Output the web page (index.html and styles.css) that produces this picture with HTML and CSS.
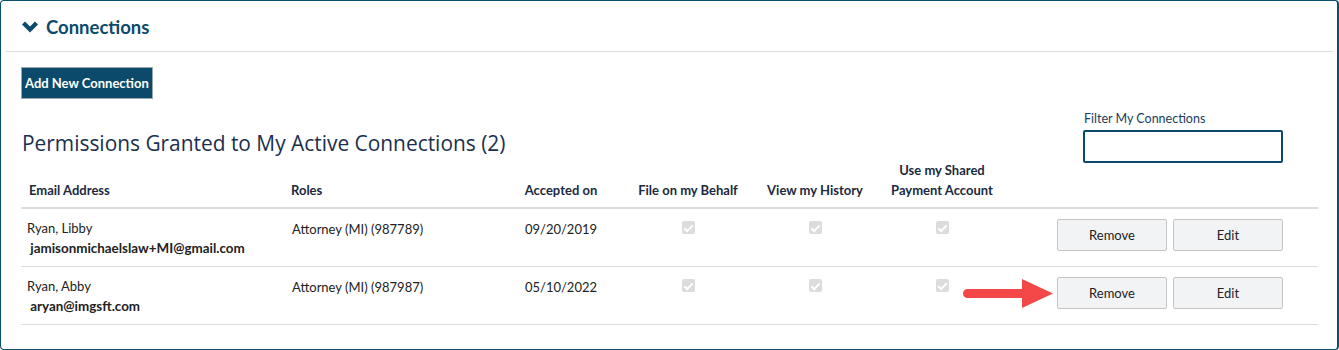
FILE: index.html
```html
<!DOCTYPE html>
<html>
<head>
<meta charset="utf-8">
<link rel="stylesheet" href="styles.css">
</head>
<body>
<div class="card">
  <div class="card-header">
    <svg class="chev" width="16" height="12" viewBox="0 0 16 12"><polygon points="0,3.5 3,0.5 8,5.5 13,0.5 16,3.5 8,11.5" fill="#0b4a6a"/></svg>
    <span class="card-title">Connections</span>
  </div>
  <div class="card-body">
    <button class="btn-primary">Add New Connection</button>
    <div class="toolbar">
      <h2 class="section-title">Permissions Granted to My Active Connections (2)</h2>
      <div class="filter">
        <label class="filter-label">Filter My Connections</label>
        <input class="filter-input" type="text">
      </div>
    </div>
    <table class="grid">
      <colgroup>
        <col class="c1"><col class="c2"><col class="c3"><col class="c4"><col class="c5"><col class="c6"><col class="c7">
      </colgroup>
      <thead>
        <tr>
          <th class="left">Email Address</th>
          <th class="left">Roles</th>
          <th>Accepted on</th>
          <th>File on my Behalf</th>
          <th>View my History</th>
          <th>Use my Shared<br>Payment Account</th>
          <th></th>
        </tr>
      </thead>
      <tbody>
        <tr>
          <td class="left"><div class="name">Ryan, Libby</div><div class="email">&nbsp;jamisonmichaelslaw+MI@gmail.com</div></td>
          <td class="left role">Attorney (MI) (987789)</td>
          <td>09/20/2019</td>
          <td><span class="chk"></span></td>
          <td><span class="chk"></span></td>
          <td><span class="chk"></span></td>
          <td class="actions"><button class="btn">Remove</button><button class="btn">Edit</button></td>
        </tr>
        <tr class="marked">
          <td class="left"><div class="name">Ryan, Abby</div><div class="email">&nbsp;aryan@imgsft.com</div></td>
          <td class="left role">Attorney (MI) (987987)</td>
          <td>05/10/2022</td>
          <td><span class="chk"></span></td>
          <td><span class="chk"></span></td>
          <td><span class="chk"></span></td>
          <td class="actions"><button class="btn">Remove</button><button class="btn">Edit</button></td>
        </tr>
      </tbody>
    </table>
  </div>
  <svg class="arrow" width="92" height="30" viewBox="0 0 92 30"><path d="M4.5 10 H59 V0 L90 14.5 L59 29 V19 H4.5 A4.5 4.5 0 0 1 4.5 10 Z" fill="#f44848"/></svg>
</div>
</body>
</html>
```
FILE: styles.css
```css
* { box-sizing: border-box; }
body {
  margin: 0;
  font-family: "Lato", "Liberation Sans", sans-serif;
  color: #222;
  background: #fff;
}
.card {
  position: relative;
  width: 1339px;
  height: 350px;
  border: 1px solid #0b4f6c;
  border-right-width: 2px;
  border-radius: 4px;
}
.card-header {
  height: 51px;
  margin: 0 4px 0 5px;
  padding-left: 16px;
  border-bottom: 1px solid #dcdcdc;
  display: flex;
  align-items: center;
  gap: 8px;
}
.chev { margin-top: 2px; }
.card-title {
  font-size: 18.5px;
  font-weight: 700;
  color: #0b4a6a;
  margin-top: 2px;
}
.card-body {
  padding: 15px 19px 0 20px;
}
.btn-primary {
  display: block;
  height: 32px;
  padding: 0 3px;
  background: #0b4a6a;
  color: #fff;
  border: 1px solid #9aa8b0;
  font-family: "Lato", sans-serif;
  font-size: 13px;
  font-weight: 700;
}
.toolbar {
  display: flex;
  justify-content: space-between;
  align-items: flex-end;
  margin-top: 12px;
}
.section-title {
  margin: 0 0 8px 1px;
  font-family: "Open Sans", sans-serif;
  font-weight: 400;
  font-size: 20.9px;
  line-height: 24px;
  color: #1b2f4e;
}
.filter {
  display: flex;
  flex-direction: column;
  margin-right: 35px;
}
.filter-label {
  font-size: 12.5px;
  line-height: 16px;
  color: #1a3d5c;
  padding-left: 1px;
}
.filter-input {
  margin-top: 3px;
  width: 200px;
  height: 33px;
  border: 2px solid #0b4a6a;
  border-radius: 2px;
}
.grid {
  width: 1297px;
  margin-top: -3px;
  border-collapse: collapse;
  table-layout: fixed;
}
.c1 { width: 262px; }
.c2 { width: 222px; }
.c3 { width: 112px; }
.c4 { width: 142px; }
.c5 { width: 112px; }
.c6 { width: 142px; }
.c7 { width: 305px; }
.grid th {
  font-size: 13px;
  font-weight: 700;
  line-height: 20px;
  color: #1c2a40;
  text-align: center;
  vertical-align: bottom;
  padding: 0 4px 7px;
  border-bottom: 2px solid #dcdcdc;
}
.grid th.left { text-align: left; padding-left: 8px; }
.grid td {
  font-size: 13px;
  line-height: 20px;
  text-align: center;
  vertical-align: top;
  padding: 10px 4px 8px;
  border-bottom: 1px solid #dcdcdc;
  color: #222;
}
.grid td.left { text-align: left; padding-left: 6px; }
.grid td.role { padding-left: 9px; }
.name { margin-top: -1px; }
.email { font-weight: 700; font-size: 13.4px; }
.chk {
  display: inline-block;
  width: 13px;
  height: 13px;
  margin-top: 2px;
  border-radius: 2px;
  background: #dcdcdc;
  position: relative;
  vertical-align: top;
}
.chk::after {
  content: "";
  position: absolute;
  left: 4px;
  top: 1.5px;
  width: 3px;
  height: 7px;
  border: solid #fff;
  border-width: 0 2px 2px 0;
  transform: rotate(45deg);
}
.grid td.actions {
  text-align: right;
  padding: 10px 35px 8px 4px;
  white-space: nowrap;
}
.btn {
  width: 110px;
  height: 32px;
  margin-left: 6px;
  background: #f2f3f5;
  border: 1px solid #c6c6c6;
  border-radius: 2px;
  font-family: "Lato", sans-serif;
  font-size: 13px;
  color: #222;
}
.arrow {
  position: absolute;
  left: 962px;
  top: 278px;
}
```
